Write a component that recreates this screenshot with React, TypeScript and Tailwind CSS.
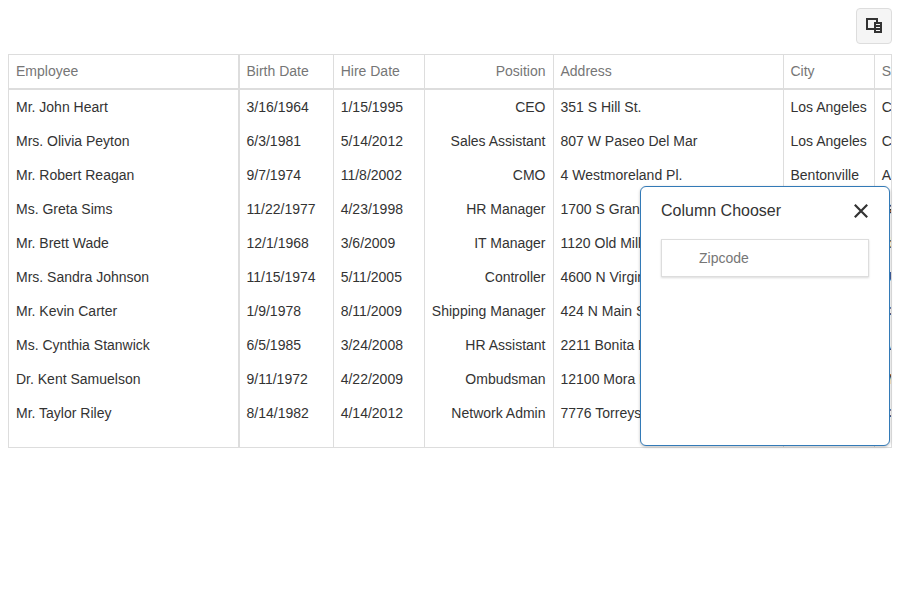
import React from "react";

const employees = [
  ["Mr. John Heart", "3/16/1964", "1/15/1995", "CEO", "351 S Hill St.", "Los Angeles", "California"],
  ["Mrs. Olivia Peyton", "6/3/1981", "5/14/2012", "Sales Assistant", "807 W Paseo Del Mar", "Los Angeles", "California"],
  ["Mr. Robert Reagan", "9/7/1974", "11/8/2002", "CMO", "4 Westmoreland Pl.", "Bentonville", "Arkansas"],
  ["Ms. Greta Sims", "11/22/1977", "4/23/1998", "HR Manager", "1700 S Grandview Dr.", "Atlanta", "Georgia"],
  ["Mr. Brett Wade", "12/1/1968", "3/6/2009", "IT Manager", "1120 Old Mill Rd.", "Boise", "Idaho"],
  ["Mrs. Sandra Johnson", "11/15/1974", "5/11/2005", "Controller", "4600 N Virginia Rd.", "Beaver", "Utah"],
  ["Mr. Kevin Carter", "1/9/1978", "8/11/2009", "Shipping Manager", "424 N Main St.", "San Diego", "California"],
  ["Ms. Cynthia Stanwick", "6/5/1985", "3/24/2008", "HR Assistant", "2211 Bonita Dr.", "Little Rock", "Arkansas"],
  ["Dr. Kent Samuelson", "9/11/1972", "4/22/2009", "Ombudsman", "12100 Mora Dr", "St. Louis", "Missouri"],
  ["Mr. Taylor Riley", "8/14/1982", "4/14/2012", "Network Admin", "7776 Torreyson Dr", "San Jose", "California"],
];

const columns = [
  { title: "Employee", cls: "w-[231px] border-r-2", pad: "px-[7px]" },
  { title: "Birth Date", cls: "w-[94px] border-r", pad: "pl-[6.5px]" },
  { title: "Hire Date", cls: "w-[91px] border-r", pad: "pl-[6.7px]" },
  { title: "Position", cls: "w-[129px] border-r text-right", pad: "pr-[7.5px]" },
  { title: "Address", cls: "w-[230px] border-r", pad: "pl-[6.5px]" },
  { title: "City", cls: "w-[91px] border-r", pad: "pl-[6.5px]" },
  { title: "State", cls: "w-[91px]", pad: "pl-[6.8px]" },
];

function Grid() {
  return (
    <div className="flex h-[394px] overflow-hidden border border-[#ddd] text-sm leading-[19px]">
      {columns.map((col, c) => (
        <div key={col.title} className={`shrink-0 border-[#ddd] whitespace-nowrap ${col.cls}`}>
          <div className={`h-[35px] border-b-2 border-[#ddd] pt-[7px] text-[#767676] ${col.pad}`}>{col.title}</div>
          {employees.map((row) => (
            <div key={row[0]} className={`h-[34px] pt-2 ${col.pad}`}>
              {row[c]}
            </div>
          ))}
        </div>
      ))}
    </div>
  );
}

function ColumnChooser() {
  return (
    <div className="absolute top-[186px] left-[640px] h-[260px] w-[250px] rounded-md border border-[#337ab7] bg-white px-5 shadow-[0_1px_3px_rgba(0,0,0,0.25)]">
      <div className="flex h-[52px] items-center justify-between pb-1">
        <span className="text-base">Column Chooser</span>
        <svg width="14" height="14" viewBox="0 0 14 14" fill="none" stroke="#333" strokeWidth="2.2" className="mr-[1px]">
          <path d="M0.8 0.8 L13.2 13.2 M13.2 0.8 L0.8 13.2" />
        </svg>
      </div>
      <div className="h-[38px] border border-[#ddd] pt-[9px] pl-[37px] text-sm leading-[19px] text-[#767676] shadow-[0_1px_2px_rgba(0,0,0,0.15)]">
        Zipcode
      </div>
    </div>
  );
}

export default function App() {
  return (
    <div className="relative h-[600px] w-[900px] overflow-hidden bg-white p-2 font-['Liberation_Sans',Arial,sans-serif] text-[#333]">
      <div className="mb-[10px] flex justify-end">
        <button className="flex h-9 w-9 items-center justify-center rounded border border-[#ddd] bg-[#f5f5f5]">
          <svg width="18" height="18" viewBox="0 0 18 18" shapeRendering="crispEdges">
            <path fill="#333" fillRule="evenodd" d="M1 1h12v4h-2V3H3v8h6v2H1z M9 5h8v11H9z M11 7v1h4V7z M11 10v1h4v-1z M11 13v1h4v-1z" />
          </svg>
        </button>
      </div>
      <Grid />
      <ColumnChooser />
    </div>
  );
}
